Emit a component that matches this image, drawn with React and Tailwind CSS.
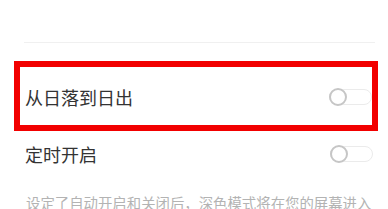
import React from "react";

function Toggle() {
  return (
    <div className="relative w-[43px] h-[16px] rounded-full border border-[#ebebeb] bg-white">
      <div className="absolute left-[-1px] top-[-2px] w-[18px] h-[18px] rounded-full border-2 border-[#c6c6c6] bg-white" />
    </div>
  );
}

export default function App() {
  return (
    <div
      className="w-[388px] h-[209px] bg-white overflow-hidden"
      style={{ fontFamily: '"Noto Sans CJK SC", "Noto Sans", sans-serif' }}
    >
      <div className="h-[42px]" />
      <div className="ml-[24px] w-[351px] h-px bg-[#f0f0f0]" />
      <div className="h-[18px]" />
      <div className="ml-[14px] w-[364px] h-[70px] border-[6px] border-[#f20000] flex items-center justify-between pl-[5px] pt-[2px]">
        <span className="text-[18px] leading-none text-[#333333]">从日落到日出</span>
        <Toggle />
      </div>
      <div className="h-[44px] flex items-center justify-between pl-[25px] pr-[15px] pt-[2px]">
        <span className="text-[18px] leading-none text-[#333333]">定时开启</span>
        <Toggle />
      </div>
      <div className="mt-[21px] pl-[26px] text-[14.4px] leading-none text-[#b3b3b3] whitespace-nowrap">
        设定了自动开启和关闭后，深色模式将在您的屏幕进入
      </div>
    </div>
  );
}
